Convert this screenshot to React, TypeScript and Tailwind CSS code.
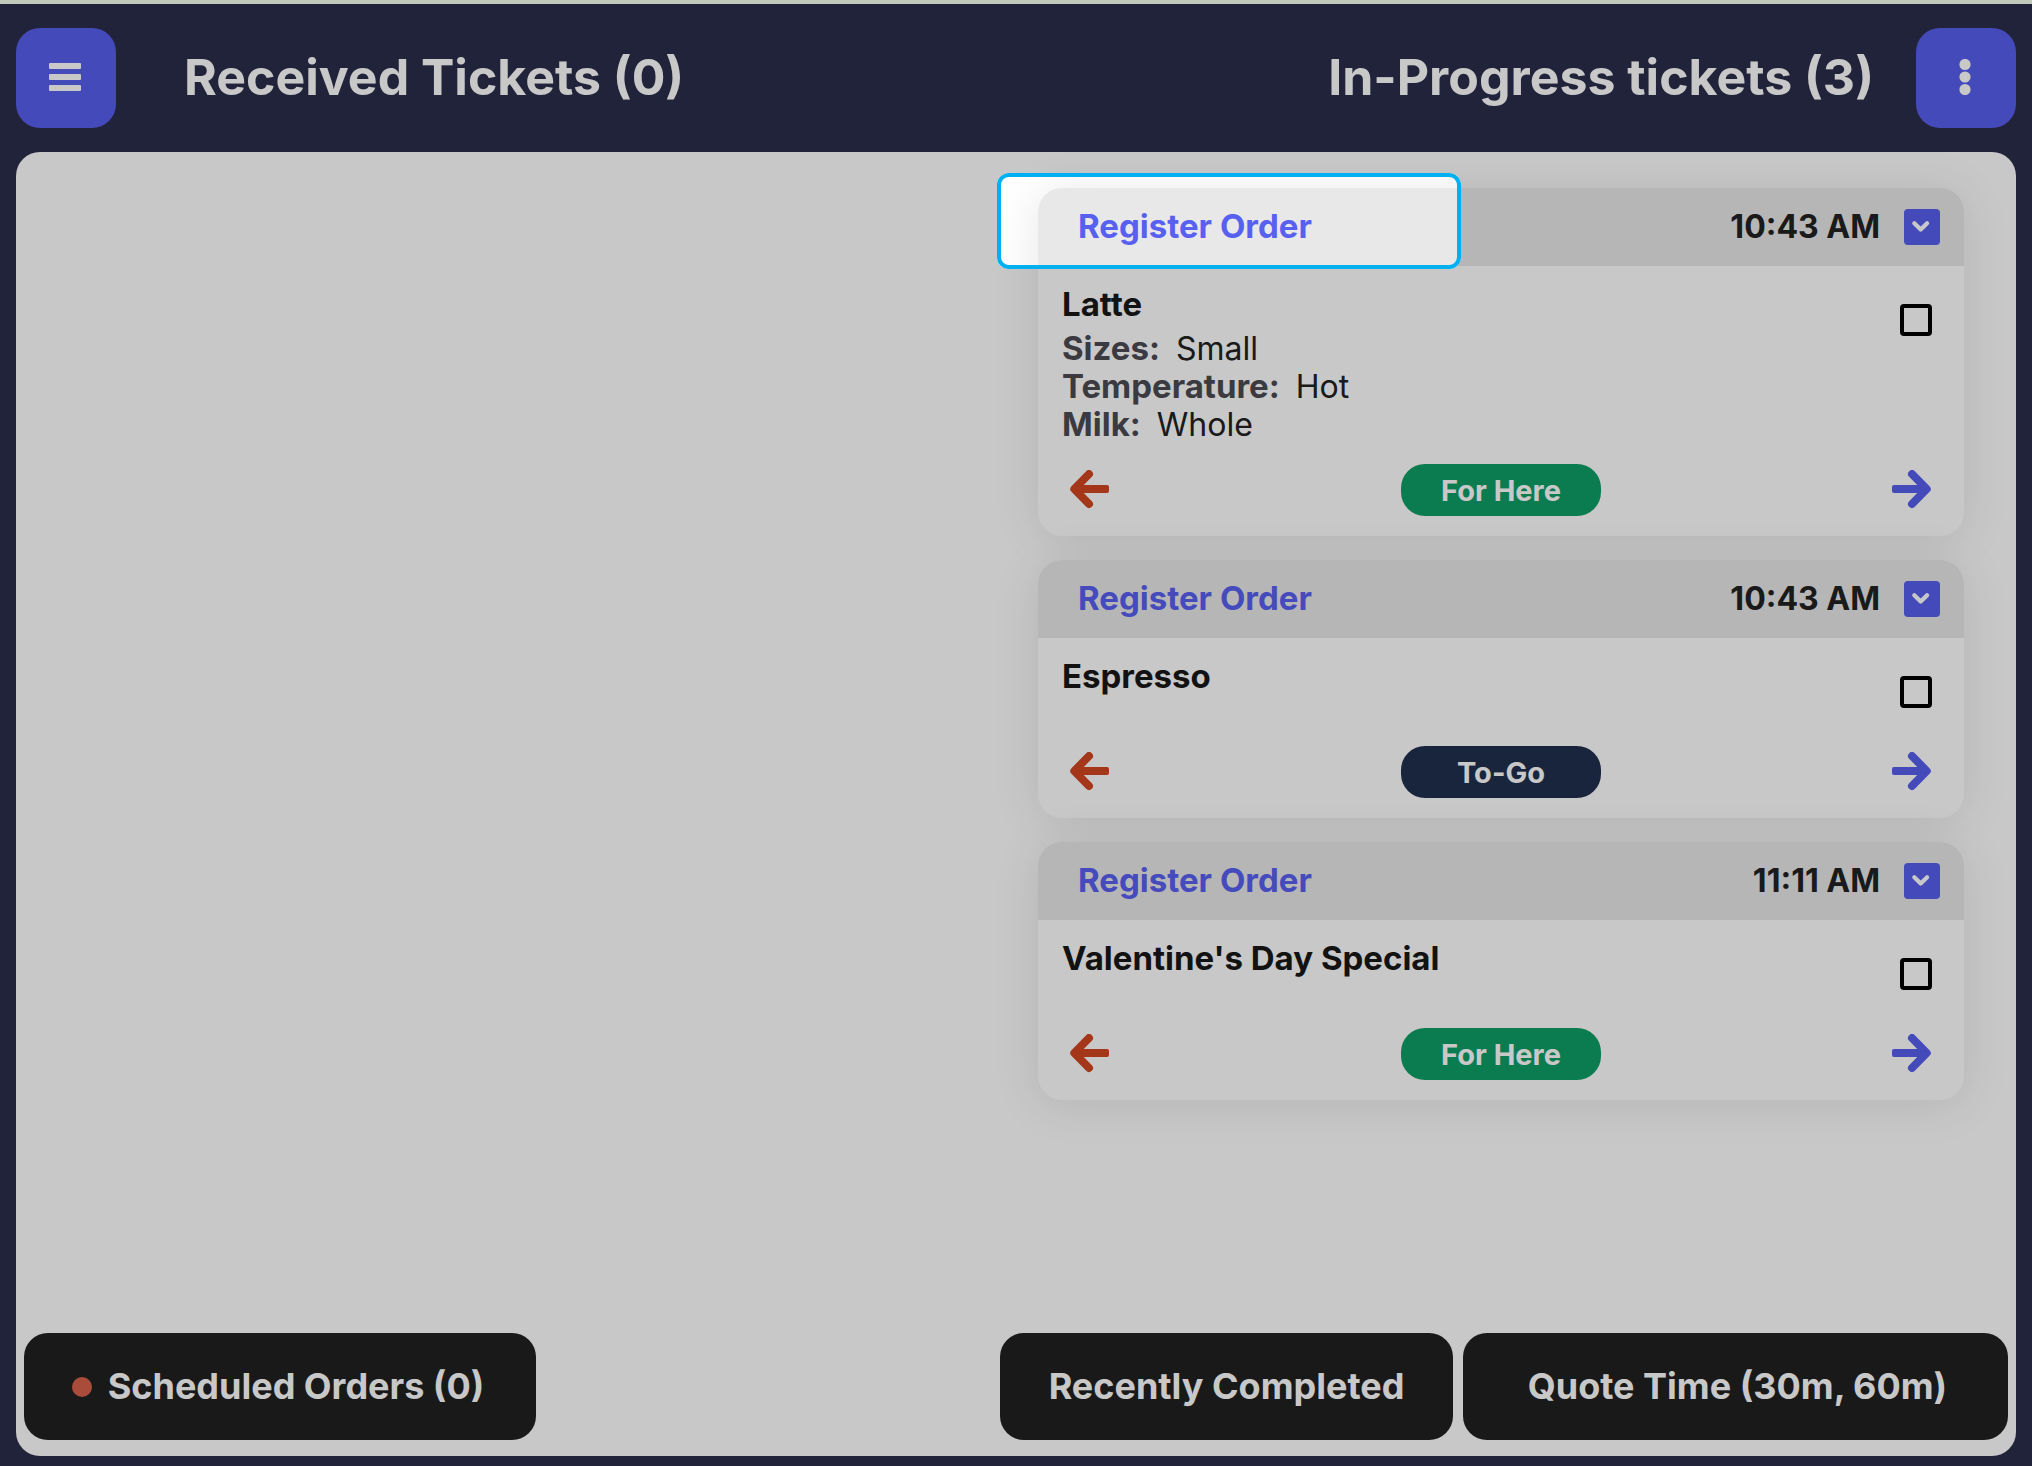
type Ticket = {
  id: string;
  time: string;
  item: string;
  options: { label: string; value: string }[];
  kind: 'here' | 'togo';
};

const tickets: Ticket[] = [
  {
    id: 't1',
    time: '10:43 AM',
    item: 'Latte',
    options: [
      { label: 'Sizes:', value: 'Small' },
      { label: 'Temperature:', value: 'Hot' },
      { label: 'Milk:', value: 'Whole' },
    ],
    kind: 'here',
  },
  { id: 't2', time: '10:43 AM', item: 'Espresso', options: [], kind: 'togo' },
  { id: 't3', time: '11:11 AM', item: "Valentine's Day Special", options: [], kind: 'here' },
];

function BarsIcon() {
  return (
    <svg width="32" height="28" viewBox="0 0 32 28" fill="currentColor" aria-hidden="true">
      <rect x="0" y="0" width="32" height="6" rx="1" />
      <rect x="0" y="11" width="32" height="6" rx="1" />
      <rect x="0" y="22" width="32" height="6" rx="1" />
    </svg>
  );
}

function DotsIcon() {
  return (
    <svg width="12" height="36" viewBox="0 0 12 36" fill="currentColor" aria-hidden="true">
      <circle cx="6" cy="5.5" r="5.6" />
      <circle cx="6" cy="18" r="5.6" />
      <circle cx="6" cy="30.5" r="5.6" />
    </svg>
  );
}

function ChevronIcon() {
  return (
    <svg width="36" height="36" viewBox="0 0 36 36" fill="none" stroke="currentColor" aria-hidden="true">
      <path d="M10.3 14.2l6.4 6.4 6.4-6.4" strokeWidth="4.2" strokeLinecap="round" strokeLinejoin="round" />
    </svg>
  );
}

function ArrowLeftIcon() {
  return (
    <svg width="40" height="40" viewBox="0 0 40 40" aria-hidden="true">
      <path
        d="M19 4L4.3 19L19 34"
        fill="none"
        stroke="currentColor"
        strokeWidth="8"
        strokeLinecap="round"
        strokeLinejoin="round"
      />
      <rect x="6" y="15" width="33" height="8" rx="2" fill="currentColor" />
    </svg>
  );
}

function ArrowRightIcon() {
  return (
    <svg width="40" height="40" viewBox="0 0 40 40" aria-hidden="true">
      <path
        d="M20 4L34.7 19L20 34"
        fill="none"
        stroke="currentColor"
        strokeWidth="8"
        strokeLinecap="round"
        strokeLinejoin="round"
      />
      <rect x="0" y="15" width="33" height="8" rx="2" fill="currentColor" />
    </svg>
  );
}

function TicketCard({ ticket, spotlight }: { ticket: Ticket; spotlight: boolean }) {
  return (
    <article className="relative rounded-3xl bg-white shadow-[0_4px_48px_rgba(0,0,0,0.1)]">
      <header className="flex h-[78px] items-center rounded-t-3xl bg-[#e8e8e8] pr-6 pl-10">
        <h3 className="flex-1 pb-0.5 text-[33px] leading-[38px] font-bold text-[#5860f0]">Register Order</h3>
        <time className="mr-6 text-[32px] leading-[38px] font-bold text-[#222222]">{ticket.time}</time>
        <button type="button" aria-label="Expand ticket" className="size-9 rounded-sm bg-[#575fec] text-white">
          <ChevronIcon />
        </button>
      </header>
      <div className="p-5 px-6">
        <div className="mb-5 flex items-start justify-between">
          <div>
            <label htmlFor={ticket.id} className="block text-[33px] leading-9 font-bold text-[#171717]">
              {ticket.item}
            </label>
            {ticket.options.length > 0 && (
              <dl className="mt-2">
                {ticket.options.map((o) => (
                  <div key={o.label} className="flex gap-4">
                    <dt className="text-[33px] leading-9 font-bold text-[#4a4b52]">{o.label}</dt>
                    <dd className="text-[32px] leading-[38px] text-[#222222]">{o.value}</dd>
                  </div>
                ))}
              </dl>
            )}
          </div>
          <input
            id={ticket.id}
            type="checkbox"
            className="my-[18px] mr-2 size-8 appearance-none rounded-sm border-4 border-black checked:bg-black"
          />
        </div>
        <div className="flex items-center justify-between px-2">
          <button type="button" aria-label="Move back" className="text-[#d24521]">
            <ArrowLeftIcon />
          </button>
          <span
            className={
              ticket.kind === 'here'
                ? 'flex h-[52px] w-[200px] items-center justify-center rounded-3xl bg-[#0e9e66] pt-0.5 text-[29px] leading-9 font-bold text-white'
                : 'flex h-[52px] w-[200px] items-center justify-center rounded-3xl bg-[#1f304d] pt-0.5 text-[29px] leading-9 font-bold text-white'
            }
          >
            {ticket.kind === 'here' ? 'For Here' : 'To-Go'}
          </span>
          <button type="button" aria-label="Move forward" className="text-[#575fec]">
            <ArrowRightIcon />
          </button>
        </div>
      </div>
      {spotlight && (
        <div className="pointer-events-none absolute -top-[15px] -left-[41px] z-50 h-24 w-[464px] rounded-xl border-4 border-[#00b0f0] shadow-[0_0_0_4000px_rgba(0,0,0,0.216)]" />
      )}
    </article>
  );
}

export default function App() {
  return (
    <div className="flex min-h-screen flex-col overflow-hidden border-t-4 border-[#c0c9ba] bg-[#2b2d4a] px-4 pb-2.5 font-['Inter',sans-serif]">
      <header className="flex h-[148px] items-center text-white">
        <button
          type="button"
          aria-label="Menu"
          className="flex size-[100px] items-center justify-center rounded-3xl bg-[#575fec] pr-0.5 pb-0.5"
        >
          <BarsIcon />
        </button>
        <h1 className="ml-[68px] flex-1 pb-0.5 text-[50px] leading-[60px] font-bold">Received Tickets (0)</h1>
        <h2 className="mr-[42px] pb-0.5 text-[50px] leading-[60px] font-bold">In-Progress tickets (3)</h2>
        <button
          type="button"
          aria-label="More options"
          className="flex size-[100px] items-center justify-center rounded-3xl bg-[#575fec] pr-0.5 pb-0.5"
        >
          <DotsIcon />
        </button>
      </header>
      <main className="flex flex-1 flex-col rounded-3xl bg-white px-2 pb-4">
        <div className="grid flex-1 grid-cols-2">
          <section aria-label="Received tickets" />
          <section aria-label="In-progress tickets" className="flex flex-col gap-6 pt-9 pr-11 pl-[22px]">
            {tickets.map((t, i) => (
              <TicketCard key={t.id} ticket={t} spotlight={i === 0} />
            ))}
          </section>
        </div>
        <footer className="flex gap-2.5 text-4xl leading-[44px] font-bold text-white">
          <button
            type="button"
            className="mr-auto flex h-[107px] w-[512px] items-center justify-center gap-4 rounded-3xl bg-[#202020] pr-1"
          >
            <span className="size-5 rounded-full bg-[#d8634a]" />
            <span className="pb-0.5">Scheduled Orders (0)</span>
          </button>
          <button type="button" className="h-[107px] w-[453px] rounded-3xl bg-[#202020] pb-0.5">
            Recently Completed
          </button>
          <button type="button" className="h-[107px] w-[545px] rounded-3xl bg-[#202020] pb-0.5 pl-1">
            Quote Time (30m, 60m)
          </button>
        </footer>
      </main>
    </div>
  );
}
